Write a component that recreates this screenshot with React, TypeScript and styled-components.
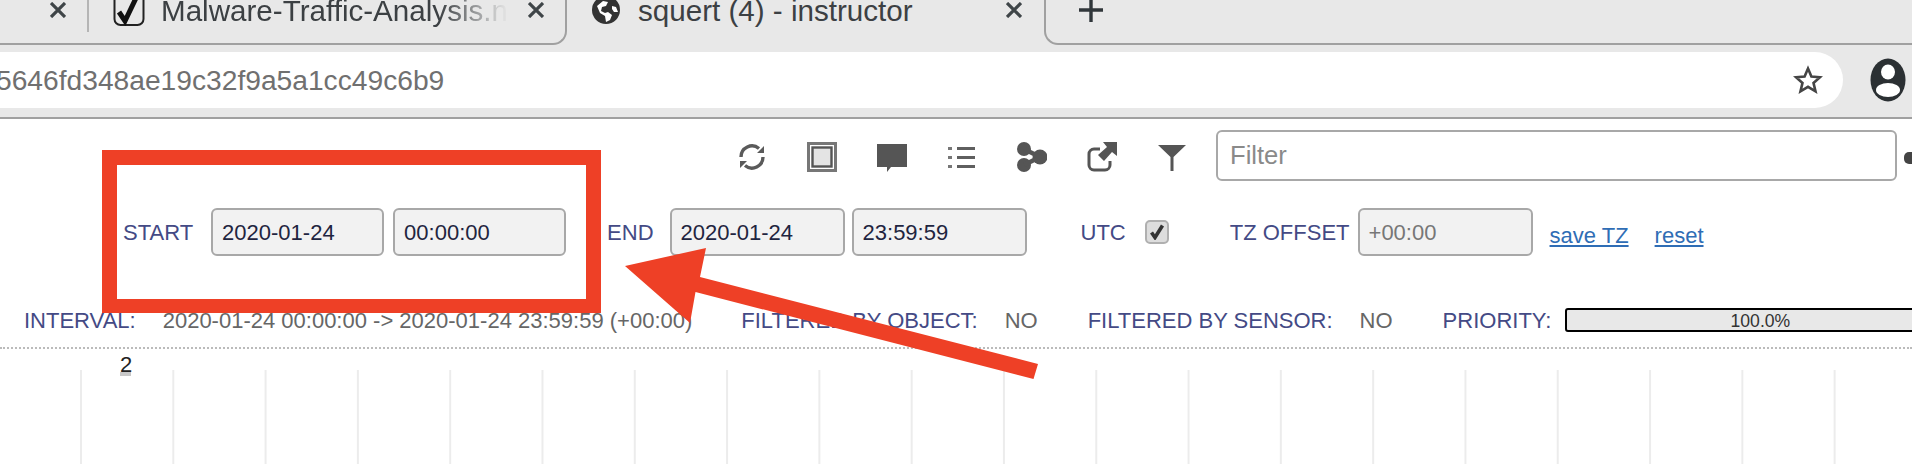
import styled, { createGlobalStyle } from 'styled-components';

const GlobalStyle = createGlobalStyle`
  html, body {
    margin: 0;
    padding: 0;
    width: 1912px;
    height: 464px;
    overflow: hidden;
    background: #fff;
    font-family: "Liberation Sans", Arial, sans-serif;
  }
`;

const TABS_LINE = '#a0a0a0';
const RED = '#ee4026';

const App = () => {
  return (
    <Screen>
      <GlobalStyle />
      <TabStrip>
        <Tab $width={89} $lined $end>
          <CloseIcon $left={46} />
          <Separator />
        </Tab>
        <Tab $width={478} $pad={24} $lined $curved>
          <Favicon viewBox="0 0 32 34">
            <rect x="1.5" y="-6" width="29" height="37" rx="6" fill="none" stroke="#222" strokeWidth="2" />
            <path d="M6 18l6 9L24 2" fill="none" stroke="#111" strokeWidth="5" />
          </Favicon>
          <TabTitle $fade>Malware-Traffic-Analysis.n</TabTitle>
          <CloseIcon $left={20} />
        </Tab>
        <Tab $width={477} $pad={25}>
          <GlobeIcon viewBox="0 0 28 28">
            <circle cx="14" cy="12" r="14" fill="#333" />
            <path d="M5 8l6-5 5 1-2 4-4 1-1 4 4 2 3-1 4 3-2 5-4 2-1-6-5-3zM20 8l4 1 2 5-4 0-2-3z" fill="#fff" />
          </GlobeIcon>
          <TabTitle>squert (4) - instructor</TabTitle>
          <CloseIcon $left={93} />
        </Tab>
        <NewTabArea>
          <PlusIcon viewBox="0 0 24 24">
            <path d="M12 0v24M0 12h24" stroke="#30363a" strokeWidth="3.4" />
          </PlusIcon>
        </NewTabArea>
      </TabStrip>

      <Toolbar>
        <UrlBar>
          <UrlText>5646fd348ae19c32f9a5a1cc49c6b9</UrlText>
          <StarIcon viewBox="0 0 30 30">
            <path
              d="M15 3.5l3.4 8 8.6.7-6.5 5.7 2 8.4-7.5-4.5-7.5 4.5 2-8.4L3 12.2l8.6-.7z"
              fill="none"
              stroke="#454545"
              strokeWidth="2.6"
            />
          </StarIcon>
        </UrlBar>
        <AvatarIcon viewBox="0 0 36 44">
          <ellipse cx="18" cy="22" rx="17.5" ry="21.5" fill="#2b3033" />
          <ellipse cx="18" cy="14" rx="7" ry="7.5" fill="#fff" />
          <ellipse cx="18" cy="32" rx="12" ry="7" fill="#fff" />
        </AvatarIcon>
      </Toolbar>

      <Page>
        <ActionRow>
          <Actions>
            <ActionIcon viewBox="0 0 30 30">
              <path d="M4 15a11 11 0 0 1 18-8.5" fill="none" stroke="#5a5a5a" strokeWidth="3.4" />
              <path d="M26 15a11 11 0 0 1-18 8.5" fill="none" stroke="#5a5a5a" strokeWidth="3.4" />
              <path d="M27 4v7h-7zM3 26v-7h7z" fill="#5a5a5a" />
            </ActionIcon>
            <ActionIcon viewBox="0 0 30 30">
              <rect x="1.5" y="1.5" width="27" height="27" fill="none" stroke="#777" strokeWidth="3" />
              <rect x="5.5" y="5.5" width="19" height="19" fill="#e4e4e4" stroke="#555" strokeWidth="2.4" />
            </ActionIcon>
            <ActionIcon viewBox="0 0 30 30">
              <path d="M0 2h30v23H14l-4 5v-5H0z" fill="#555" />
            </ActionIcon>
            <ActionIcon viewBox="0 0 30 30">
              <path d="M1 5h4v3H1zM1 14h4v3H1zM1 23h4v3H1z" fill="#777" />
              <path d="M10 6.5h18M10 15.5h18M10 24.5h18" stroke="#5f5f5f" strokeWidth="3" />
            </ActionIcon>
            <ActionIcon viewBox="0 0 30 30">
              <circle cx="7" cy="7" r="7" fill="#555" />
              <circle cx="7" cy="23" r="7" fill="#555" />
              <circle cx="23" cy="15" r="7.5" fill="#555" />
              <path d="M7 7l16 8L7 23" fill="none" stroke="#555" strokeWidth="4.5" />
            </ActionIcon>
            <ActionIcon viewBox="0 0 30 30">
              <path
                d="M13 7H7a5 5 0 0 0-5 5v11a5 5 0 0 0 5 5h11a5 5 0 0 0 5-5v-4"
                fill="none"
                stroke="#555"
                strokeWidth="3"
              />
              <path d="M16 0h14v14l-5-4-8 9-6-6 9-8z" fill="#555" />
            </ActionIcon>
            <ActionIcon viewBox="0 0 30 30">
              <path d="M1 3h28L16.5 15v14h-3V15z" fill="#555" />
            </ActionIcon>
          </Actions>
          <FilterInput placeholder="Filter" readOnly />
          <CutGlyph />
        </ActionRow>

        <DateRow>
          <Label $after={18}>START</Label>
          <ValueBox $width={173} $after={9}>
            2020-01-24
          </ValueBox>
          <ValueBox $width={173} $after={41}>
            00:00:00
          </ValueBox>
          <Label $after={16}>END</Label>
          <ValueBox $after={7}>2020-01-24</ValueBox>
          <ValueBox $after={54}>23:59:59</ValueBox>
          <Label $after={19}>UTC</Label>
          <CheckBox $after={61}>
            <svg viewBox="0 0 16 16" width="16" height="16">
              <path d="M2.5 8.5l3.5 5L13.5 1.5" fill="none" stroke="#333" strokeWidth="3.6" />
            </svg>
          </CheckBox>
          <Label $after={8}>TZ OFFSET</Label>
          <ValueBox $after={17} $muted>
            +00:00
          </ValueBox>
          <LinkText $after={26}>save TZ</LinkText>
          <LinkText>reset</LinkText>
        </DateRow>

        <StatusRow>
          <Label $after={27}>INTERVAL:</Label>
          <Value $after={49}>2020-01-24 00:00:00 -&gt; 2020-01-24 23:59:59 (+00:00)</Value>
          <Label $after={27}>FILTERED BY OBJECT:</Label>
          <Value $after={50}>NO</Value>
          <Label $after={27}>FILTERED BY SENSOR:</Label>
          <Value $after={50}>NO</Value>
          <Label $after={14}>PRIORITY:</Label>
          <PriorityBar>100.0%</PriorityBar>
        </StatusRow>

        <Divider />
        <YLabel>2</YLabel>
        <ChartGrid />
      </Page>

      <HighlightBox />
      <ArrowOverlay viewBox="0 0 1912 464">
        <polygon points="706,248 625,266 690,323 695.5,292 1033.5,379 1038,364 700,277" fill={RED} />
      </ArrowOverlay>
    </Screen>
  );
};

const Screen = styled.div`
  position: relative;
  width: 1912px;
  height: 464px;
  overflow: hidden;
  background: #fff;
  display: flex;
  flex-direction: column;
`;

const TabStrip = styled.div`
  display: flex;
  height: 45px;
  background: #e8e8e8;
  flex-shrink: 0;
`;

const Tab = styled.div<{ $width: number; $pad?: number; $lined?: boolean; $curved?: boolean; $end?: boolean }>`
  display: flex;
  align-items: flex-start;
  justify-content: ${(p) => (p.$end ? 'flex-end' : 'flex-start')};
  box-sizing: border-box;
  width: ${(p) => p.$width}px;
  height: 45px;
  padding-left: ${(p) => p.$pad ?? 0}px;
  border-bottom: 2px solid ${(p) => (p.$lined ? TABS_LINE : 'transparent')};
  border-right: ${(p) => (p.$curved ? `2px solid ${TABS_LINE}` : 'none')};
  border-bottom-right-radius: ${(p) => (p.$curved ? '14px' : '0')};
`;

const NewTabArea = styled.div`
  flex: 1;
  box-sizing: border-box;
  height: 45px;
  padding: 0 0 0 33px;
  border-bottom: 2px solid ${TABS_LINE};
  border-left: 2px solid ${TABS_LINE};
  border-bottom-left-radius: 14px;
`;

const Separator = styled.div`
  width: 2px;
  height: 32px;
  margin-left: 21px;
  background: #b5b5b5;
`;

const CloseX = styled.svg<{ $left: number }>`
  width: 16px;
  height: 16px;
  margin: 2px 0 0 ${(p) => p.$left}px;
  flex-shrink: 0;
`;

const CloseIcon = ({ $left }: { $left: number }) => (
  <CloseX $left={$left} viewBox="0 0 16 16">
    <path d="M1 1l14 14M15 1L1 15" stroke="#3f4548" strokeWidth="3.2" />
  </CloseX>
);

const Favicon = styled.svg`
  width: 32px;
  height: 34px;
  margin-top: -6px;
  flex-shrink: 0;
`;

const GlobeIcon = styled.svg`
  width: 28px;
  height: 28px;
  margin-top: -2px;
  flex-shrink: 0;
`;

const PlusIcon = styled.svg`
  width: 24px;
  height: 24px;
  margin-top: -2px;
`;

const TabTitle = styled.div<{ $fade?: boolean }>`
  width: ${(p) => (p.$fade ? '347px' : 'auto')};
  margin: -7px 0 0 ${(p) => (p.$fade ? '16px' : '18px')};
  overflow: hidden;
  white-space: nowrap;
  font-size: 29.6px;
  line-height: 36px;
  color: #3c4043;
  ${(p) =>
    p.$fade &&
    `-webkit-mask-image: linear-gradient(to right, #000 80%, transparent 100%);
     mask-image: linear-gradient(to right, #000 80%, transparent 100%);`}
`;

const Toolbar = styled.div`
  display: flex;
  align-items: center;
  box-sizing: border-box;
  height: 74px;
  padding: 7px 0 9px;
  background: #e8e8e8;
  border-bottom: 2px solid ${TABS_LINE};
  flex-shrink: 0;
`;

const UrlBar = styled.div`
  display: flex;
  align-items: center;
  justify-content: space-between;
  box-sizing: border-box;
  width: 1843px;
  height: 56px;
  padding-right: 20px;
  background: #fff;
  border-radius: 0 28px 28px 0;
  overflow: hidden;
`;

const UrlText = styled.span`
  margin-left: -4px;
  font-size: 28.2px;
  color: #707070;
  white-space: nowrap;
`;

const StarIcon = styled.svg`
  width: 30px;
  height: 30px;
`;

const AvatarIcon = styled.svg`
  width: 36px;
  height: 44px;
  margin-left: 27px;
`;

const Page = styled.div`
  flex: 1;
  display: flex;
  flex-direction: column;
  min-height: 0;
  background: #fff;
`;

const ActionRow = styled.div`
  display: flex;
  align-items: center;
  justify-content: flex-end;
  height: 51px;
  margin-top: 11px;
`;

const Actions = styled.div`
  display: flex;
  align-items: center;
  gap: 40px;
  margin: 3px 29px 0 0;
`;

const ActionIcon = styled.svg`
  width: 30px;
  height: 30px;
  flex-shrink: 0;
`;

const FilterInput = styled.input`
  box-sizing: border-box;
  width: 681px;
  height: 51px;
  padding: 0 12px;
  border: 2px solid #a8a8a8;
  border-radius: 6px;
  background: #fff;
  font: 25.6px "Liberation Sans", Arial, sans-serif;
  outline: none;
  &::placeholder {
    color: #8a8a8a;
  }
`;

const CutGlyph = styled.div`
  width: 8px;
  height: 12px;
  margin: 4px 0 0 7px;
  background: #444;
  border-radius: 5px 0 0 5px;
`;

const DateRow = styled.div`
  display: flex;
  align-items: center;
  height: 48px;
  margin-top: 27px;
  padding-left: 123px;
`;

const Label = styled.span<{ $after?: number }>`
  margin-right: ${(p) => p.$after ?? 0}px;
  padding-top: 2px;
  font-size: 22px;
  color: #444a85;
  white-space: nowrap;
`;

const Value = styled.span<{ $after?: number }>`
  margin-right: ${(p) => p.$after ?? 0}px;
  padding-top: 2px;
  font-size: 22px;
  color: #666;
  white-space: nowrap;
`;

const ValueBox = styled.div<{ $width?: number; $after?: number; $muted?: boolean }>`
  box-sizing: border-box;
  width: ${(p) => p.$width ?? 175}px;
  height: 48px;
  margin-right: ${(p) => p.$after ?? 0}px;
  padding-left: 9px;
  border: 2px solid #a8a8a8;
  border-radius: 6px;
  background: #f2f2f2;
  font-size: 22px;
  line-height: 46px;
  color: ${(p) => (p.$muted ? '#777' : '#1f2540')};
`;

const CheckBox = styled.div<{ $after?: number }>`
  display: flex;
  align-items: center;
  justify-content: center;
  box-sizing: border-box;
  width: 24px;
  height: 24px;
  margin-right: ${(p) => p.$after ?? 0}px;
  border: 2px solid #b0b0b0;
  border-radius: 5px;
  background: #ddd;
`;

const LinkText = styled.a<{ $after?: number }>`
  margin: 8px ${(p) => p.$after ?? 0}px 0 0;
  font-size: 22px;
  color: #2f6db5;
  text-decoration: underline;
  white-space: nowrap;
`;

const StatusRow = styled.div`
  display: flex;
  align-items: center;
  box-sizing: border-box;
  height: 24px;
  margin-top: 52px;
  padding-left: 24px;
`;

const PriorityBar = styled.div`
  flex-shrink: 0;
  box-sizing: border-box;
  width: 390px;
  height: 24px;
  border: 2px solid #000;
  border-radius: 3px;
  background: #e8e8e8;
  font-size: 17.6px;
  line-height: 22px;
  text-align: center;
  color: #333;
`;

const Divider = styled.div`
  margin-top: 15px;
  border-top: 2px dotted #bbb;
`;

const YLabel = styled.div`
  box-sizing: border-box;
  width: 11px;
  height: 22px;
  margin: 5px 0 -6px 120px;
  border-bottom: 4px solid #c8c8c8;
  font-size: 22px;
  line-height: 22px;
  color: #222;
`;

const ChartGrid = styled.div`
  flex: 1;
  background-image: linear-gradient(to right, #ececec 2px, transparent 2px);
  background-size: 92.3px 100%;
  background-position: 80px 0;
`;

const HighlightBox = styled.div`
  position: absolute;
  left: 102px;
  top: 150px;
  box-sizing: border-box;
  width: 499px;
  height: 163px;
  border: 15px solid ${RED};
  border-bottom-width: 14px;
`;

const ArrowOverlay = styled.svg`
  position: absolute;
  left: 0;
  top: 0;
  width: 1912px;
  height: 464px;
  pointer-events: none;
`;

export default App;
